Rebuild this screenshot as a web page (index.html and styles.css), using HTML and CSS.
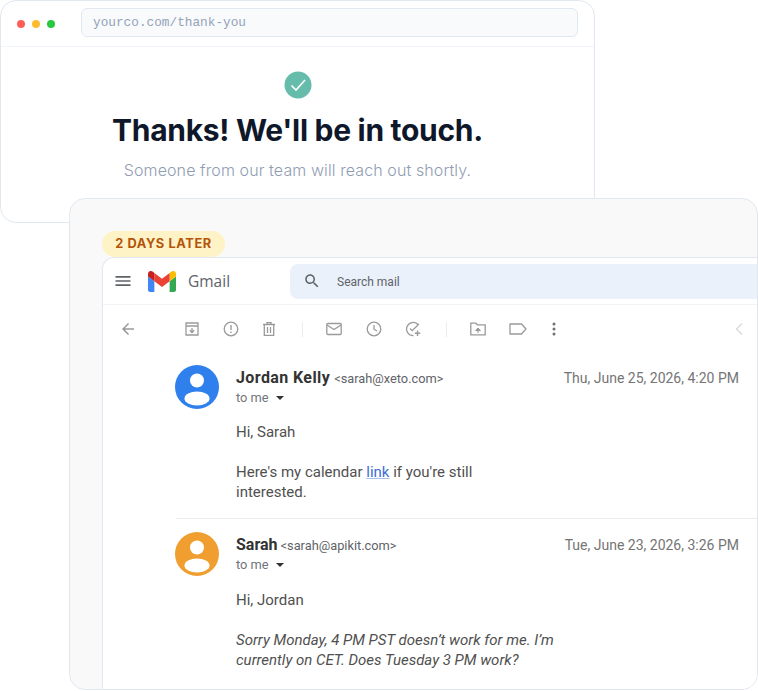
FILE: index.html
```html
<!DOCTYPE html>
<html lang="en">
<head>
<meta charset="utf-8">
<title>Thanks</title>
<link rel="stylesheet" href="styles.css">
</head>
<body>
<main class="stage">
  <section class="window back">
    <div class="chrome">
      <div class="dots"><i class="dot red"></i><i class="dot amber"></i><i class="dot green"></i></div>
      <div class="url">yourco.com/thank-you</div>
    </div>
    <div class="thanks">
      <svg class="check" viewBox="0 0 28 28" width="28" height="28"><circle cx="14" cy="14" r="13.5" fill="#65bcab"/><path d="M7.5 14.5l4.5 4.5 9-10" fill="none" stroke="#fff" stroke-width="1.6"/></svg>
      <h1>Thanks! We'll be in touch.</h1>
      <p>Someone from our team will reach out shortly.</p>
    </div>
  </section>
  <section class="window front">
    <div class="badge">2 DAYS LATER</div>
    <div class="gmail">
      <header class="g-head">
        <svg class="ic-menu" viewBox="0 0 24 24" width="20" height="20"><path fill="#5f6368" d="M3 18h18v-2H3v2zm0-5h18v-2H3v2zm0-7v2h18V6H3z"/></svg>
        <svg class="g-logo" viewBox="52 42 88 66" width="28" height="21"><path fill="#4285f4" d="M58 108h14V74L52 59v43c0 3.32 2.69 6 6 6"/><path fill="#34a853" d="M120 108h14c3.32 0 6-2.69 6-6V59l-20 15"/><path fill="#fbbc04" d="M120 48v26l20-15v-8c0-7.42-8.47-11.65-14.4-7.2"/><path fill="#ea4335" d="M72 74V48l24 18 24-18v26L96 92"/><path fill="#c5221f" d="M52 51v8l20 15V48l-5.6-4.2c-5.94-4.45-14.4-.22-14.4 7.2"/></svg>
        <span class="g-name">Gmail</span>
        <div class="search">
          <svg viewBox="0 0 24 24" width="18" height="18"><path fill="#5f6368" d="M15.5 14h-.79l-.28-.27C15.41 12.59 16 11.11 16 9.5 16 5.91 13.09 3 9.5 3S3 5.91 3 9.5 5.91 16 9.5 16c1.61 0 3.09-.59 4.23-1.57l.27.28v.79l5 4.99L20.49 19l-4.99-5zm-6 0C7.01 14 5 11.99 5 9.5S7.01 5 9.5 5 14 7.01 14 9.5 11.99 14 9.5 14z"/></svg>
          <span class="search-text">Search mail</span>
        </div>
      </header>
      <div class="toolbar">
        <svg class="back-arrow" viewBox="0 0 24 24" width="18" height="18"><path fill="#9a9a9a" d="M20 11H7.83l5.59-5.59L12 4l-8 8 8 8 1.41-1.41L7.83 13H20v-2z"/></svg>
        <div class="tools">
          <svg class="t i1" viewBox="0 0 16 16" width="16" height="16"><path d="M2 5V2h12v3M1.500 5h13M2 5v9h12V5M8 7v4.500M5.800 9.300L8 11.500l2.200-2.200" fill="none" stroke="#9a9a9a" stroke-width="1.3"/></svg>
          <svg class="t i2" viewBox="0 0 16 16" width="16" height="16"><circle cx="8" cy="8" r="6.8" fill="none" stroke="#9a9a9a" stroke-width="1.3"/><path d="M8 4v5M8 10.5v1.5" stroke="#9a9a9a" stroke-width="1.4"/></svg>
          <svg class="t i3" viewBox="0 0 16 16" width="16" height="16"><path d="M2 3.500h12M6 3.500V1.700h4v1.800M3.300 3.500V14.300h9.400V3.500M6.500 6v6M9.500 6v6" fill="none" stroke="#9a9a9a" stroke-width="1.3"/></svg>
          <i class="sep s1"></i>
          <svg class="t i4" viewBox="0 0 16 16" width="16" height="16"><rect x="0.8" y="2.500" width="14.400" height="11" rx="1" fill="none" stroke="#9a9a9a" stroke-width="1.3"/><path d="M1 4l7 4.500L15 4" fill="none" stroke="#9a9a9a" stroke-width="1.3"/></svg>
          <svg class="t i5" viewBox="0 0 16 16" width="16" height="16"><circle cx="8" cy="8" r="6.800" fill="none" stroke="#9a9a9a" stroke-width="1.3"/><path d="M8 4v4.200l3 1.800" fill="none" stroke="#9a9a9a" stroke-width="1.3"/></svg>
          <svg class="t i6" viewBox="0 0 16 16" width="16" height="16"><path d="M13 3.500A6.600 6.600 0 1 0 8.500 14.600M5 7.500l2.200 2.200L14 3" fill="none" stroke="#9a9a9a" stroke-width="1.3"/><path d="M12.500 9.500v5.500M9.800 12.200h5.500" stroke="#9a9a9a" stroke-width="1.4"/></svg>
          <i class="sep s2"></i>
          <svg class="t i7" viewBox="0 0 16 16" width="16" height="16"><path d="M.8 2.200h5l1.600 1.600h7.800v10H.8z" fill="none" stroke="#9a9a9a" stroke-width="1.3"/><path d="M8 12V7.500M5.600 9.600L8 7l2.400 2.600z" fill="#9a9a9a" stroke="#9a9a9a"/></svg>
          <svg class="t i8" viewBox="0 0 18 16" width="18" height="16"><path d="M1 3h11.500l4.500 5-4.500 5H1z" fill="none" stroke="#9a9a9a" stroke-width="1.3" stroke-linejoin="round"/></svg>
          <svg class="t i9" viewBox="0 0 4 14" width="4" height="14"><circle cx="2" cy="2" r="1.500" fill="#6f6f6f"/><circle cx="2" cy="7" r="1.500" fill="#6f6f6f"/><circle cx="2" cy="12" r="1.500" fill="#6f6f6f"/></svg>
        </div>
        <svg class="chev" viewBox="0 0 10 14" width="10" height="14"><path d="M8 1.500L2.500 7 8 12.500" fill="none" stroke="#dadce0" stroke-width="1.500"/></svg>
      </div>

      <article class="msg first">
        <svg class="avatar" viewBox="0 0 44 44" width="44" height="44"><circle cx="22" cy="22" r="22" fill="#2f80ed"/><circle cx="22" cy="15.500" r="7" fill="#fff"/><ellipse cx="22" cy="33.500" rx="12.500" ry="7" fill="#fff"/></svg>
        <div class="msg-main">
          <div class="from"><strong>Jordan Kelly</strong> <span class="addr">&lt;sarah@xeto.com&gt;</span><time>Thu, June 25, 2026, 4:20 PM</time></div>
          <div class="to">to me <i class="caret"></i></div>
          <div class="body">
            <p>Hi, Sarah</p>
            <p>Here's my calendar <a href="#">link</a> if you're still<br>interested.</p>
          </div>
        </div>
      </article>
      <hr class="rule">
      <article class="msg second">
        <svg class="avatar" viewBox="0 0 44 44" width="44" height="44"><circle cx="22" cy="22" r="22" fill="#f09e2f"/><circle cx="22" cy="15.500" r="7" fill="#fff"/><ellipse cx="22" cy="33.500" rx="12.500" ry="7" fill="#fff"/></svg>
        <div class="msg-main">
          <div class="from"><strong>Sarah</strong> <span class="addr">&lt;sarah@apikit.com&gt;</span><time>Tue, June 23, 2026, 3:26 PM</time></div>
          <div class="to">to me <i class="caret"></i></div>
          <div class="body">
            <p>Hi, Jordan</p>
            <p><em>Sorry Monday, 4 PM PST doesn’t work for me. I’m<br>currently on CET. Does Tuesday 3 PM work?</em></p>
          </div>
        </div>
      </article>
    </div>
  </section>
</main>
</body>
</html>
```
FILE: styles.css
```css
* { box-sizing: border-box; }
html, body { margin: 0; padding: 0; background: #fff; }
body { font-family: "Inter", sans-serif; }
.stage { position: relative; width: 758px; height: 691px; overflow: hidden; }

.window { position: absolute; border: 1px solid #e2e8f0; overflow: hidden; }
.back { left: 0; top: 0; width: 595px; height: 223px; border-radius: 16px; background: #fff; }
.front { left: 69px; top: 198px; width: 689px; height: 492px; border-radius: 16px; background: #f9f9f9; padding: 32px 0 0 32px; }

.chrome { display: flex; align-items: center; height: 46px; padding: 0 16px; border-bottom: 1px solid #f1f5f9; }
.dots { display: flex; gap: 7px; width: 64px; margin-top: 1px; }
.dot { width: 8px; height: 8px; border-radius: 50%; }
.red { background: #ff5f57; }
.amber { background: #febc2e; }
.green { background: #28c840; }
.url { flex: 1; height: 29px; margin-top: -2px; padding: 0 11px; font: 12.750px/28px "Liberation Mono", monospace; color: #94a3b8; background: #f8fafc; border: 1px solid #e2e8f0; border-radius: 6px; }

.thanks { display: flex; flex-direction: column; align-items: center; padding-top: 24px; }
.check { display: block; }
.thanks h1 { margin: 13px 0 0; font-size: 30px; line-height: 36px; font-weight: 700; color: #0f172a; letter-spacing: -0.3px; }
.thanks p { margin: 10px 0 0; font-size: 16px; line-height: 24px; font-weight: 300; letter-spacing: 0.1px; color: #8f9db2; }

.badge { width: 123px; height: 26px; background: #fef3c7; border-radius: 13px; font-size: 12.800px; line-height: 25px; font-weight: 700; color: #b45309; text-align: center; letter-spacing: 0.6px; }

.gmail { width: 660px; height: 440px; background: #fff; border: 1px solid #e2e8f0; border-right: 0; border-radius: 12px 0 0 0; font-family: "Roboto", sans-serif; color: #3c4043; }
.g-head { display: flex; align-items: center; height: 47px; border-bottom: 1px solid #f1f3f4; padding-left: 10px; }
.g-logo { margin-left: 15px; }
.g-name { margin-left: 12px; width: 102px; font: 15.500px "Open Sans", sans-serif; color: #5f6368; }
.search { display: flex; align-items: center; gap: 16px; flex: 1; height: 35px; padding-left: 13px; background: #eaf1fb; border-radius: 8px 0 0 8px; font-size: 12px; color: #5f6368; }
.search-text { padding-top: 2px; }

.toolbar { display: flex; align-items: center; height: 48px; padding: 0 18px 0 16px; }
.tools { display: flex; align-items: center; margin-left: 47px; flex: 1; }
.t { display: block; flex: none; }
.i2 { margin-left: 23px; }
.i3 { margin-left: 22px; }
.sep { display: block; width: 1px; height: 15px; background: #ececec; }
.s1 { margin-left: 25px; }
.i4 { margin-left: 23px; }
.i5 { margin-left: 24px; }
.i6 { margin-left: 23px; }
.s2 { margin-left: 25px; }
.i7 { margin-left: 23px; }
.i8 { margin-left: 23px; }
.i9 { margin-left: 25px; }

.msg { display: flex; gap: 17px; padding-left: 72px; }
.first { padding-top: 12px; }
.second { padding-top: 13px; }
.avatar { display: block; flex: none; }
.msg-main { flex: 1; padding-right: 23px; }
.from { display: flex; align-items: baseline; height: 24px; line-height: 24px; padding-top: 1px; }
.from strong { font-size: 16px; font-weight: 700; color: #333; margin-right: 4px; }
.first strong { letter-spacing: 0.4px; }
.second .addr { margin-left: -1px; }
.addr { font-size: 12.800px; color: #5f6368; }
.from time { margin-left: auto; font-size: 14px; color: #757575; }
.to { display: flex; align-items: center; gap: 6px; height: 18px; font-size: 12.800px; line-height: 18px; color: #70757a; }
.caret { width: 0; height: 0; margin-left: 1px; margin-top: -1px; border: 4px solid transparent; border-top-color: #333; border-bottom: 0; }
.body { padding-top: 16px; font-size: 15px; line-height: 20px; color: #505050; }
.first .body { padding-top: 15px; }
.body p { margin: 0 0 20px; }
.body p:last-child { margin-bottom: 0; }
.body a { color: #3b6fd4; text-decoration: underline; text-decoration-color: #a9c0ec; }
.rule { margin: 16px 0 0 73px; border: 0; height: 1px; background: #ececec; }
```
